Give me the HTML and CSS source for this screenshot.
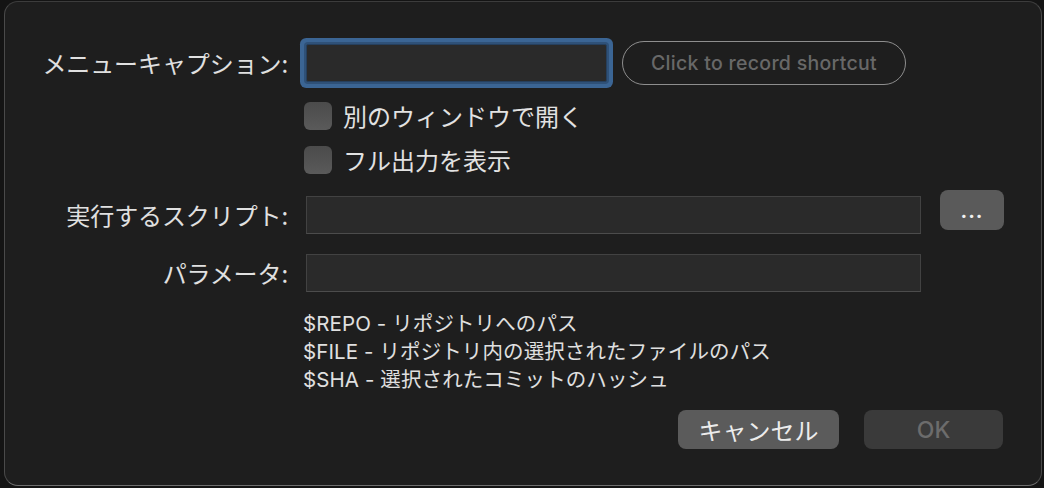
FILE: index.html
```html
<!DOCTYPE html>
<html lang="ja">
<head>
<meta charset="utf-8">
<title>カスタムアクション</title>
<link rel="stylesheet" href="styles.css">
</head>
<body>
<div class="frame">
  <div class="dialog">
    <div class="row row-caption">
      <div class="label">メニューキャプション:</div>
      <div class="controls">
        <div class="field field-focus"></div>
        <div class="shortcut">Click to record shortcut</div>
      </div>
    </div>
    <div class="row row-check1">
      <div class="label"></div>
      <div class="controls">
        <span class="checkbox"></span><span class="check-text">別のウィンドウで開く</span>
      </div>
    </div>
    <div class="row row-check2">
      <div class="label"></div>
      <div class="controls">
        <span class="checkbox"></span><span class="check-text">フル出力を表示</span>
      </div>
    </div>
    <div class="row row-script">
      <div class="label">実行するスクリプト:</div>
      <div class="controls">
        <div class="field field-wide"></div>
        <div class="browse">...</div>
      </div>
    </div>
    <div class="row row-param">
      <div class="label">パラメータ:</div>
      <div class="controls">
        <div class="field field-wide"></div>
      </div>
    </div>
    <div class="help">
      <div>$REPO - リポジトリへのパス</div>
      <div>$FILE - リポジトリ内の選択されたファイルのパス</div>
      <div>$SHA - 選択されたコミットのハッシュ</div>
    </div>
    <div class="buttons">
      <div class="btn btn-cancel">キャンセル</div>
      <div class="btn btn-ok">OK</div>
    </div>
  </div>
</div>
</body>
</html>
```

FILE: styles.css
```css
html, body {
  margin: 0;
  padding: 0;
  background: #141414;
  width: 1044px;
  height: 488px;
  overflow: hidden;
}

.frame {
  padding: 1px 2px 2px 4px;
  box-sizing: border-box;
  width: 1044px;
  height: 488px;
}

.dialog {
  box-sizing: border-box;
  width: 1038px;
  height: 485px;
  background: #1e1e1e;
  border: 1px solid;
  border-color: #3c3c3c #4a4a4a #6e6e6e #4a4a4a;
  border-radius: 14px;
  padding: 42px 38px 0 0;
  font-family: "Inter", "Noto Sans CJK JP", sans-serif;
  color: #dcdcdc;
}

.row {
  display: flex;
  align-items: center;
}

.label {
  width: 283px;
  flex: none;
  text-align: right;
  font-family: "Noto Sans CJK JP", sans-serif;
  font-size: 24px;
  line-height: 38px;
  color: #e0e0e0;
  letter-spacing: -0.1px;
}

.controls {
  display: flex;
  align-items: center;
  margin-left: 18px;
}

.row-caption { height: 38px; }
.row-check1 { height: 28px; margin-top: 20px; }
.row-check2 { height: 28px; margin-top: 16px; }
.row-script { height: 38px; margin-top: 22px; }
.row-param { height: 38px; margin-top: 20px; }

.field {
  box-sizing: border-box;
  height: 38px;
  background: #2a2a2a;
  border: 1px solid #424242;
  border-bottom-color: #4c4c4c;
}

.field-focus {
  width: 301px;
  border-color: #26405e;
  border-radius: 2px;
  box-shadow: 0 0 0 2px #2f5178, 0 0 0 6px #3b6594;
}

.field-wide {
  width: 615px;
}

.shortcut {
  box-sizing: border-box;
  margin-left: 15px;
  width: 284px;
  height: 44px;
  border: 1px solid #8e8e8e;
  border-radius: 22px;
  display: flex;
  align-items: center;
  justify-content: center;
  font-size: 19.5px;
  font-weight: 500;
  color: #686868;
  letter-spacing: 0.3px;
}

.checkbox {
  box-sizing: border-box;
  width: 28px;
  height: 28px;
  margin-left: -2px;
  border-radius: 6px;
  background: linear-gradient(#4b4b4b, #5a5a5a);
  flex: none;
}

.check-text {
  margin-left: 11px;
  font-family: "Noto Sans CJK JP", sans-serif;
  font-size: 24px;
  line-height: 28px;
  color: #e2e2e2;
}

.browse {
  align-self: flex-start;
  margin-top: -6px;
  margin-left: 19px;
  width: 64px;
  height: 40px;
  border-radius: 8px;
  background: #5a5a5a;
  color: #f0f0f0;
  font-size: 20px;
  font-weight: 700;
  letter-spacing: 1px;
  display: flex;
  align-items: center;
  justify-content: center;
  line-height: 1;
  padding-top: 2px;
  box-sizing: border-box;
}

.help {
  margin: 18px 0 0 298px;
  font-size: 20.5px;
  line-height: 28px;
  color: #e0e0e0;
  letter-spacing: 0.1px;
}

.buttons {
  display: flex;
  justify-content: flex-end;
  gap: 25px;
  margin-top: 16px;
}

.btn {
  height: 39px;
  border-radius: 8px;
  display: flex;
  align-items: center;
  justify-content: center;
  font-size: 24px;
}

.btn-cancel {
  width: 161px;
  background: #5b5b5b;
  color: #ececec;
  font-family: "Noto Sans CJK JP", sans-serif;
}

.btn-ok {
  width: 139px;
  background: #3a3a3a;
  color: #6c6c6c;
  font-size: 23px;
  font-weight: 500;
}
```
